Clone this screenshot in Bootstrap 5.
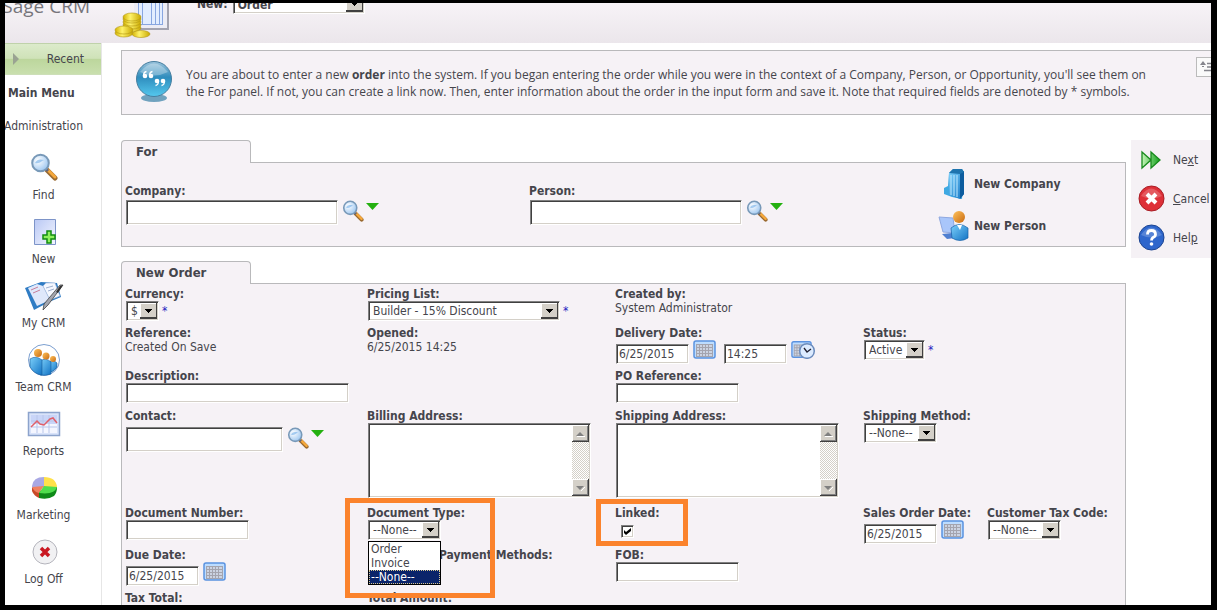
<!DOCTYPE html>
<html lang="en">
<head>
<meta charset="utf-8">
<meta name="viewport" content="width=device-width, initial-scale=1">
<title>Sage CRM - New Order</title>
<link href="https://cdn.jsdelivr.net/npm/bootstrap@5.3.0/dist/css/bootstrap.min.css" rel="stylesheet">
<script src="https://cdn.jsdelivr.net/npm/bootstrap@5.3.0/dist/js/bootstrap.bundle.min.js"></script>
<style>
:root { --panel: #f6f2f6; --edge: #b9b9bb; --ink: #45454c; --face: #d4d0c8; }
body { font: 12px/14px "DejaVu Sans Condensed", Tahoma, sans-serif; color: var(--ink); background: #000; }
a { color: inherit; text-decoration: none; }
svg { display: block; flex: none; }
.window-frame { height: 100vh; border: solid #000; border-width: 3px 6px 5px 5px; background: #fff; }
/* header */
.topbar { height: 40px; background: linear-gradient(#f7f3f7, #ebe6eb); }
.topbar-inner { margin-top: -9px; }
.brand-name { width: 85px; font: 19px/24px "Open Sans", sans-serif; color: #77757b; direction: rtl; white-space: nowrap; }
.topbar .new-for { line-height: 20px; gap: 5px; margin-left: 27px; }
/* sidebar */
.side { width: 97px; flex: none; border-right: 1px solid #e6e6e6; }
.recent { height: 32px; padding: 0 17px 0 8px; background: linear-gradient(#dcebcb 0, #cfe2b8 48%, #bcd69c 50%, #c9dfae); border-top: 1px solid #bfd2aa; border-bottom: 1px solid #cddfb8; }
.side-title { padding: 10px 0 0 3px; line-height: 16px; }
.side-menu { width: 77px; white-space: nowrap; }
.side-menu a { display: flex; flex-direction: column; align-items: center; height: 64px; }
.side-menu .admin-link { height: 50px; padding-top: 18px; }
.side-menu svg { margin-bottom: 3px; }
/* banner */
.notice { width: calc(100% + 6px); height: 65px; margin-top: -1px; background: var(--panel); border: 1px solid var(--edge); padding-left: 12px; }
.notice p { font: 12px/17px "Open Sans", sans-serif; flex: 1; margin: 0 32px 0 10px; padding-top: 15px; }
.notice button { width: 20px; height: 20px; border: 1px solid #bbb; background: #fafafa; padding: 3px 2px; margin-top: 6px; }
/* panels */
.tab-head { width: 130px; height: 23px; margin-bottom: -1px; position: relative; background: var(--panel); border: 1px solid var(--edge); border-bottom: 0; border-radius: 4px 4px 0 0; padding: 3px 14px; font-size: 13px; font-weight: bold; line-height: 16px; }
.panel { background: var(--panel); border: 1px solid var(--edge); padding-left: 3px; }
.for-grid { display: grid; grid-template-columns: 404fr 409fr 187fr; height: 85px; }
.for-grid .lookup { padding-top: 21px; }
.for-grid .ctl { padding-top: 2px; }
.for-grid .new-link { height: 42px; }
.order-grid { display: grid; grid-template-columns: 242fr 248fr 248fr 124fr 138fr; grid-template-rows: 39px 43px 40px 97px 42px 43px 40px; padding-top: 3px; }
.order-grid > div { white-space: nowrap; min-width: 0; }
.cap { display: block; font-weight: bold; height: 14px; }
.ctl { display: flex; margin-left: 1px; }
.field, .pick, .area { border: 1px solid; border-color: #808080 #fff #fff #808080; box-shadow: inset 1px 1px #404040, inset -1px -1px var(--face); background-color: #fff; color: var(--ink); border-radius: 0; outline: 0; }
.field { height: 20px; padding: 1px 2px; }
.field-tall { height: 25px; }
.pick { appearance: none; height: 20px; padding: 0 20px 0 4px; background: #fff url("data:image/svg+xml,%3Csvg xmlns='http://www.w3.org/2000/svg' width='18' height='18' shape-rendering='crispEdges'%3E%3Cpath d='M0 1h18v16H0z' fill='%23404040'/%3E%3Cpath d='M0 1h16v14H0z' fill='%23fff'/%3E%3Cpath d='M1 2h15v13H1z' fill='%23d4d0c8'/%3E%3Cpath d='M5 7h7v1h-1v1h-1v1H9v1H8v-1H7V9H6V8H5z' fill='%23000'/%3E%3C/svg%3E") right center no-repeat; }
.area { width: 223px; height: 75px; display: flex; padding: 1px; }
.area textarea { flex: 1; min-width: 0; border: 0; outline: 0; resize: none; overflow: hidden; padding: 2px; background: none; }
.rail { width: 17px; background: repeating-conic-gradient(#d4d0c8 0 25%, #fff 0 50%) 0 0/2px 2px; }
.req { color: #1c1cc0; margin-left: 3px; line-height: 20px; }
.w33 { width: 33px; } .w61 { width: 61px; } .w63 { width: 63px; } .w73 { width: 73px; } .w123 { width: 123px; } .w132 { width: 132px; }
.w157 { width: 157px; } .w192 { width: 192px; } .w212 { width: 212px; } .w223 { width: 223px; }
.tick { appearance: none; width: 13px; height: 13px; margin: 5px 0 0 5px; border: 1px solid; border-color: #808080 #fff #fff #808080; box-shadow: inset 1px 1px #404040, inset -1px -1px var(--face); background: #fff; }
.tick:checked { background: #fff url("data:image/svg+xml,%3Csvg xmlns='http://www.w3.org/2000/svg' width='11' height='11'%3E%3Cpath d='M2 4l2 2 5-4v3L4 9 2 7z' fill='%23000'/%3E%3C/svg%3E"); }
.icon-btn { border: 0; background: none; padding: 0; align-self: flex-start; margin-left: 4px; }
.drop-btn { margin: 3px 0 0 2px; }
/* open list and highlight frames lie over the form */
.open-list { position: absolute; top: 35px; left: 1px; width: 73px; z-index: 2; background: #fff; border: 1px solid #000; padding: 0; margin: 0; list-style: none; }
.open-list li { padding-left: 2px; line-height: 14px; }
.open-list .chosen { background: #0a246a; color: #fff; outline: 1px dotted #d8c890; outline-offset: -1px; }
.mark-frame { position: absolute; z-index: 3; border: 5px solid #fb832c; pointer-events: none; }
.mark-type { left: -22px; top: -8px; width: 150px; height: 100px; }
.mark-linked { left: -19px; top: -7px; width: 92px; height: 47px; }
.pay { padding-left: 72px; }
/* actions */
.actions { width: 80px; flex: none; background: #f5f1f5; padding-left: 7px; height: 118px; margin-left: 5px; }
.actions button { display: flex; align-items: center; gap: 8px; height: 39px; border: 0; background: none; padding: 0; color: inherit; white-space: nowrap; }
</style>
</head>
<body>
<svg width="0" height="0" class="position-absolute" aria-hidden="true">
  <defs>
    <radialGradient id="gLens" cx=".35" cy=".35" r=".7"><stop offset="0" stop-color="#fff"/><stop offset="1" stop-color="#9cc6f0"/></radialGradient>
    <linearGradient id="gBlue" x2="1" y2="1"><stop stop-color="#7cd0fa"/><stop offset="1" stop-color="#1273c4"/></linearGradient>
    <linearGradient id="gPage" x2="1" y2="1"><stop stop-color="#b9c8f4"/><stop offset="1" stop-color="#f4f6ff"/></linearGradient>
    <linearGradient id="gOrb" x2="0" y2="1"><stop stop-color="#9cc4dc"/><stop offset=".45" stop-color="#2f8dbd"/><stop offset="1" stop-color="#55c8ee"/></linearGradient>
    <linearGradient id="gCoin" x2="1"><stop stop-color="#d2b100"/><stop offset=".4" stop-color="#fff36a"/><stop offset="1" stop-color="#c9a800"/></linearGradient>
    <linearGradient id="gSkin" x2="1" y2="1"><stop stop-color="#ffc25c"/><stop offset="1" stop-color="#c86a10"/></linearGradient>
    <linearGradient id="gGreen" x2="1" y2="0"><stop stop-color="#c4f5b8"/><stop offset="1" stop-color="#12a01c"/></linearGradient>
  </defs>
  <symbol id="lens" viewBox="0 0 28 28">
    <path d="M17 17l8 8" stroke="#9a6a30" stroke-width="5" stroke-linecap="round"/><path d="M18 17l7 7" stroke="#f5a83c" stroke-width="3" stroke-linecap="round"/><path d="M15 15l3 3" stroke="#667" stroke-width="3"/>
    <circle cx="10.500" cy="10" r="8.300" fill="url(#gLens)" stroke="#7899b8" stroke-width="2"/><path d="M5 10c2-4 5-4 9-3-3 1-4 4-9 3z" fill="#6faee8" opacity=".6"/>
  </symbol>
  <symbol id="cal" viewBox="0 0 23 19">
    <rect x="1" y="1" width="21" height="17" rx="2" fill="#bcdcff" stroke="#5a92e0" stroke-width="1.500"/><path d="M3 4h17v13H3z" fill="#a4a4ae"/>
    <path d="M4 5h2v2H4zM7 5h2v2H7zM10 5h2v2h-2zM13 5h2v2h-2zM16 5h3v2h-3zM4 8h2v2H4zM7 8h2v2H7zM10 8h2v2h-2zM13 8h2v2h-2zM16 8h3v2h-3zM4 11h2v2H4zM7 11h2v2H7zM10 11h2v2h-2zM13 11h2v2h-2zM16 11h3v2h-3zM4 14h2v2H4zM7 14h2v2H7zM10 14h2v2h-2zM13 14h2v2h-2zM16 14h3v2h-3z" fill="#cbd3e2"/>
  </symbol>
  <symbol id="drop" viewBox="0 0 13 7"><path d="M0 0h13L6.500 7z" fill="#24b010"/></symbol>
  <symbol id="sbUp" viewBox="0 0 17 17"><path d="M0 0h17v17H0z" fill="#404040"/><path d="M0 0h16v16H0z" fill="#fff"/><path d="M1 1h15v15H1z" fill="#808080"/><path d="M1 1h14v14H1z" fill="#d4d0c8"/><path d="M5 11h8v1H5z" fill="#fff"/><path d="M4 11h8L8 7z" fill="#808080"/></symbol>
  <symbol id="sbDown" viewBox="0 0 17 17"><path d="M0 0h17v17H0z" fill="#404040"/><path d="M0 0h16v16H0z" fill="#fff"/><path d="M1 1h15v15H1z" fill="#808080"/><path d="M1 1h14v14H1z" fill="#d4d0c8"/><path d="M13 8l-4 4" stroke="#fff"/><path d="M4 7h8l-4 4z" fill="#808080"/></symbol>
</svg>

<div class="window-frame d-flex flex-column overflow-hidden">
  <header class="topbar overflow-hidden flex-shrink-0">
    <div class="topbar-inner d-flex">
      <div class="brand-name"><span dir="ltr">Sage CRM</span></div>
      <svg class="ms-4" width="56" height="46" viewBox="0 0 56 46">
        <path d="M20 0h35v36H20z" fill="#a3a3b0"/><path d="M20 0h33v34H20z" fill="#ececf5"/><path d="M24 0h25v31H24z" fill="#88a6e0"/><path d="M25 0h3v30h-3zM29 0h8v30h-8zM38 0h3v30h-3zM42 0h3v30h-3zM46 0h2v30h-2z" fill="#e2edff"/>
        <g fill="url(#gCoin)" stroke="#b09410" stroke-width=".6"><ellipse cx="18" cy="34" rx="9" ry="4"/><ellipse cx="18" cy="31" rx="9" ry="4"/><ellipse cx="18" cy="28" rx="9" ry="4"/><ellipse cx="18" cy="25" rx="9" ry="4"/><ellipse cx="18" cy="23" rx="9" ry="4"/><ellipse cx="10" cy="39" rx="9" ry="4"/><ellipse cx="10" cy="36" rx="9" ry="4"/><ellipse cx="27" cy="40" rx="9" ry="3.500"/></g>
      </svg>
      <div class="new-for d-flex fw-bold">
        <label for="newType">New:</label>
        <select class="pick fw-bold w132" id="newType"><option>Order</option></select>
      </div>
    </div>
  </header>

  <div class="d-flex flex-grow-1" style="min-height:0">
    <nav class="side">
      <a href="#" class="recent d-flex align-items-center justify-content-between">
        <svg width="6" height="12" viewBox="0 0 6 12"><path d="M0 0l6 6-6 6z" fill="#9aa392"/></svg>Recent
      </a>
      <div class="side-title fw-bold">Main Menu</div>
      <div class="side-menu">
        <a href="#" class="admin-link">Administration</a>
        <a href="#"><svg width="28" height="34" viewBox="0 0 28 34"><use href="#lens" y="2" width="28" height="28"/></svg>Find</a>
        <a href="#"><svg width="28" height="34" viewBox="0 0 28 34"><path d="M4.500 4.500h21v25h-21z" fill="url(#gPage)" stroke="#7d94c8"/><path d="M17 16h4v4h4v4h-4v4h-4v-4h-4v-4h4z" fill="#8df05a" stroke="#118a11" stroke-width="1.500"/></svg>New</a>
        <a href="#"><svg width="42" height="34" viewBox="0 0 42 34"><path d="M2 9l16-6 16 1 4 14-12 5-15 8z" fill="#2f7cc4"/><path d="M5 9l9-4 6 2 7 14-13 6z" fill="#dfe8fb"/><path d="M20 7l3-3 9 0 5 13-10 4z" fill="#f5f8ff" stroke="#9fb4d8" stroke-width=".6"/><path d="M8 11l7-3M10 14l7-3" stroke="#c77f9b"/><path d="M23 9l7-2M25 12l6-2" stroke="#9fb0d0"/><path d="M40 6L25 26l-5 5 1-6L37 6z" fill="#a3a6b0" stroke="#444" stroke-width=".8"/><path d="M37 7l3-1-5 8-2-1z" fill="#333"/></svg>My CRM</a>
        <a href="#"><svg width="34" height="34" viewBox="0 0 34 34"><circle cx="17" cy="17" r="15.500" fill="#fff" stroke="#7c9fd0"/><g fill="url(#gBlue)" stroke="#155a9c" stroke-width=".6"><path d="M22 30V19q4-3 8 1v4q-2 4-8 6z"/><path d="M13 32V18q6-4 11 1v12q-5 2-11 1z"/><path d="M3 24v-8q6-4 12 1v15q-8-1-12-8z"/></g><g fill="url(#gSkin)"><circle cx="11" cy="10" r="4"/><circle cx="19" cy="13" r="3.500"/><circle cx="26" cy="16" r="3"/></g></svg>Team CRM</a>
        <a href="#"><svg width="34" height="34" viewBox="0 0 34 34"><path d="M1.500 5.500h31v23h-31z" fill="#d9e3fa" stroke="#8ca3cc" stroke-width="1.500"/><path d="M4 8h26v18H4z" fill="#f4f6ff"/><path d="M4 8h26v9H4z" fill="#c9d5f8"/><path d="M4 14h26M4 20h26M10 8v18M16 8v18M22 8v18" stroke="#b9c6ea"/><path d="M4 20l6-6 3 3 4 1 6-6 3-1 4 5" fill="none" stroke="#e0606a" stroke-width="1.500"/></svg>Reports</a>
        <a href="#"><svg width="28" height="34" viewBox="0 0 28 34"><path d="M2 15v5q2 5 7 7V16z" fill="#c94a28"/><path d="M9 20v7q9 2 15-2 3-3 3-9z" fill="#0e8a18"/><path d="M14 16V6Q3 6 2 15v2z" fill="#a9a8e4"/><path d="M14 16V6q12 0 13 10z" fill="#ffe14a"/><path d="M14 15L2 16q2 5 7 6z" fill="#f08060"/><path d="M14 15l13 1q-2 8-18 6z" fill="#4fde4c"/></svg>Marketing</a>
        <a href="#"><svg width="28" height="34" viewBox="0 0 28 34"><circle cx="15" cy="17" r="12" fill="#f1f1f3" stroke="#b4b4bc"/><path d="M11 13l8 8M19 13l-8 8" stroke="#c91822" stroke-width="3.500"/></svg>Log Off</a>
      </div>
    </nav>

    <main class="flex-grow-1 pt-2" style="min-width:0;padding-left:19px">
      <section class="notice d-flex">
        <svg class="mt-2" width="42" height="46" viewBox="0 0 42 46">
          <ellipse cx="20" cy="39" rx="13" ry="4" fill="#4f8db0" opacity=".8"/><circle cx="20" cy="20" r="17.500" fill="url(#gOrb)" stroke="#477e9f"/><path d="M6 13Q20-4 34 13 20 20 6 13z" fill="#fff" opacity=".3"/>
          <g fill="#fff"><circle cx="11" cy="17" r="2.300"/><circle cx="17" cy="17" r="2.300"/><circle cx="23" cy="22" r="2.300"/><circle cx="29" cy="22" r="2.300"/></g><g fill="none" stroke="#fff" stroke-width="1.300"><path d="M9.500 17q0-4 3-4.500M15.500 17q0-4 3-4.500M24.500 22q0 4-3 4.500M30.500 22q0 4-3 4.500"/></g>
        </svg>
        <p>You are about to enter a new <b>order</b> into the system. If you began entering the order while you were in the context of a Company, Person, or Opportunity, you'll see them on the For panel. If not, you can create a link now. Then, enter information about the order in the input form and save it. Note that required fields are denoted by * symbols.</p>
        <button type="button" aria-label="Collapse"><svg width="16" height="12" viewBox="0 0 16 12"><path d="M1 4l3-4 3 4zM3 5h2v1H3z" fill="#85858c"/><path d="M8 2.500h7M8 6h7M5 9.500h10" stroke="#85858c" stroke-width="1.500"/></svg></button>
      </section>

      <div class="d-flex align-items-start" style="margin-top:25px">
        <div class="flex-grow-1" style="min-width:0">
          <div class="tab-head">For</div>
          <section class="panel for-grid">
            <div class="lookup">
              <label class="cap" for="company">Company:</label>
              <div class="ctl"><input class="field field-tall w212" id="company"><button type="button" class="icon-btn" aria-label="Find company"><svg width="22" height="22"><use href="#lens" width="22" height="22"/></svg></button><button type="button" class="icon-btn drop-btn" aria-label="Company options"><svg width="13" height="7"><use href="#drop"/></svg></button></div>
            </div>
            <div class="lookup">
              <label class="cap" for="person">Person:</label>
              <div class="ctl"><input class="field field-tall w212" id="person"><button type="button" class="icon-btn" aria-label="Find person"><svg width="22" height="22"><use href="#lens" width="22" height="22"/></svg></button><button type="button" class="icon-btn drop-btn" aria-label="Person options"><svg width="13" height="7"><use href="#drop"/></svg></button></div>
            </div>
            <div class="d-flex flex-column fw-bold text-nowrap">
              <a href="#" class="new-link d-flex align-items-center gap-1"><svg width="32" height="34" viewBox="0 0 32 34"><path d="M11 6l4-4h9l2 3-2 27-10-2-8-3v-6l4-2z" fill="#3fa9e2"/><path d="M11 6h11l4-1v22l-4 5-11-4z" fill="url(#gBlue)"/><path d="M22 6l4-2v23l-4 5z" fill="#0d5c9e"/><path d="M11 6l4-4h9l2 3-4 2z" fill="#1e74ae"/><path d="M13 8v20M16 8v21M19 8v22" stroke="#bfe9ff"/></svg>New Company</a>
              <a href="#" class="new-link d-flex align-items-center gap-1"><svg width="32" height="34" viewBox="0 0 32 34"><path d="M1 8l14 1 2 15-12-1z" fill="#a9c6fa" stroke="#8fa8e0"/><path d="M4 25l10-1 3 5-8 1z" fill="#4f7fd0"/><path d="M13 19q8-7 17 0v10q-8 5-16 0z" fill="url(#gBlue)" stroke="#1560a8" stroke-width=".7"/><path d="M19 16l3 5 2-5z" fill="#fff"/><circle cx="21" cy="8" r="6" fill="url(#gSkin)"/></svg>New Person</a>
            </div>
          </section>

          <div class="tab-head" style="margin-top:14px">New Order</div>
          <form class="panel order-grid" onsubmit="return false">
            <div><label class="cap" for="cur">Currency:</label><div class="ctl"><select class="pick w33" id="cur"><option>$</option></select><span class="req">*</span></div></div>
            <div><label class="cap" for="price">Pricing List:</label><div class="ctl"><select class="pick w192" id="price"><option>Builder - 15% Discount</option></select><span class="req">*</span></div></div>
            <div style="grid-column:span 3"><span class="cap">Created by:</span>System Administrator</div>

            <div><span class="cap">Reference:</span>Created On Save</div>
            <div><span class="cap">Opened:</span>6/25/2015 14:25</div>
            <div><label class="cap" for="deliv">Delivery Date:</label><div class="ctl"><input class="field w73 mt-1" id="deliv" value="6/25/2015"><button type="button" class="icon-btn" aria-label="Pick date"><svg width="23" height="19"><use href="#cal"/></svg></button><input class="field w63 ms-2 mt-1" id="delivTime" aria-label="Delivery time" value="14:25"><button type="button" class="icon-btn" aria-label="Pick time"><svg width="25" height="19" viewBox="0 0 25 19"><use href="#cal" width="21" height="19"/><circle cx="16" cy="11" r="7.300" fill="#dcebff" stroke="#6c8cbc" stroke-width="1.500"/><path d="M13 8l3 4 4-3" fill="none" stroke="#223" stroke-width="1.300"/></svg></button></div></div>
            <div style="grid-column:span 2"><label class="cap" for="status">Status:</label><div class="ctl"><select class="pick w61" id="status"><option>Active</option></select><span class="req">*</span></div></div>

            <div style="grid-column:span 2"><label class="cap" for="desc">Description:</label><div class="ctl"><input class="field w223" id="desc"></div></div>
            <div style="grid-column:span 3"><label class="cap" for="po">PO Reference:</label><div class="ctl"><input class="field w123" id="po"></div></div>

            <div><label class="cap" for="contact">Contact:</label><div class="ctl pt-1"><input class="field field-tall w157" id="contact"><button type="button" class="icon-btn" aria-label="Find contact"><svg width="22" height="22"><use href="#lens" width="22" height="22"/></svg></button><button type="button" class="icon-btn drop-btn" aria-label="Contact options"><svg width="13" height="7"><use href="#drop"/></svg></button></div></div>
            <div><label class="cap" for="bill">Billing Address:</label><div class="ctl"><div class="area"><textarea id="bill"></textarea><div class="rail d-flex flex-column justify-content-between"><svg width="17" height="17"><use href="#sbUp"/></svg><svg width="17" height="17"><use href="#sbDown"/></svg></div></div></div></div>
            <div><label class="cap" for="ship">Shipping Address:</label><div class="ctl"><div class="area"><textarea id="ship"></textarea><div class="rail d-flex flex-column justify-content-between"><svg width="17" height="17"><use href="#sbUp"/></svg><svg width="17" height="17"><use href="#sbDown"/></svg></div></div></div></div>
            <div style="grid-column:span 2"><label class="cap" for="method">Shipping Method:</label><div class="ctl"><select class="pick w73" id="method"><option>--None--</option></select></div></div>

            <div><label class="cap" for="docnum">Document Number:</label><div class="ctl"><input class="field w123" id="docnum"></div></div>
            <div class="position-relative"><label class="cap" for="doctype">Document Type:</label><div class="ctl"><select class="pick w73" id="doctype"><option>--None--</option><option>Order</option><option>Invoice</option></select></div>
              <ul class="open-list"><li>Order</li><li>Invoice</li><li class="chosen">--None--</li></ul><div class="mark-frame mark-type"></div></div>
            <div class="position-relative"><label class="cap" for="linked">Linked:</label><div class="ctl"><input type="checkbox" class="tick" id="linked" checked></div><div class="mark-frame mark-linked"></div></div>
            <div><label class="cap" for="sod">Sales Order Date:</label><div class="ctl"><input class="field w73 mt-1" id="sod" value="6/25/2015"><button type="button" class="icon-btn" aria-label="Pick date"><svg width="23" height="19"><use href="#cal"/></svg></button></div></div>
            <div><label class="cap" for="tax">Customer Tax Code:</label><div class="ctl"><select class="pick w73" id="tax"><option>--None--</option></select></div></div>

            <div><label class="cap" for="due">Due Date:</label><div class="ctl"><input class="field w73 mt-1" id="due" value="6/25/2015"><button type="button" class="icon-btn" aria-label="Pick date"><svg width="23" height="19"><use href="#cal"/></svg></button></div></div>
            <div><span class="cap pay">Payment Methods:</span></div>
            <div style="grid-column:span 3"><label class="cap" for="fob">FOB:</label><div class="ctl"><input class="field w123" id="fob"></div></div>

            <div><span class="cap">Tax Total:</span></div>
            <div><span class="cap">Total Amount:</span></div>
          </form>
        </div>
        <aside class="actions">
          <button type="button"><svg width="27" height="27" viewBox="0 0 27 27"><path d="M4 6l9 8-9 8zM13 6l9 8-9 8z" fill="url(#gGreen)" stroke="#178a1c" stroke-width="1.300"/></svg><span>Ne<u>x</u>t</span></button>
          <button type="button"><svg width="27" height="27" viewBox="0 0 27 27"><circle cx="13.500" cy="13.500" r="12.500" fill="#de3038" stroke="#a81c24"/><path d="M3 11Q13-4 24 11q-10 5-21 0z" fill="#fff" opacity=".2"/><path d="M9 9l9 9M18 9l-9 9" stroke="#fff" stroke-width="4"/></svg><span><u>C</u>ancel</span></button>
          <button type="button"><svg width="27" height="27" viewBox="0 0 27 27"><circle cx="13.500" cy="13.500" r="12.500" fill="#2e66cc" stroke="#1b4390"/><path d="M3 11Q13-4 24 11q-10 5-21 0z" fill="#fff" opacity=".2"/><path d="M9.500 10.500q0-4 4-4t4 4q0 2-2.500 3-1.500 1-1.500 3" fill="none" stroke="#fff" stroke-width="2.800"/><circle cx="13.500" cy="20" r="1.800" fill="#fff"/></svg><span>Hel<u>p</u></span></button>
        </aside>
      </div>
    </main>
  </div>
</div>
</body>
</html>
